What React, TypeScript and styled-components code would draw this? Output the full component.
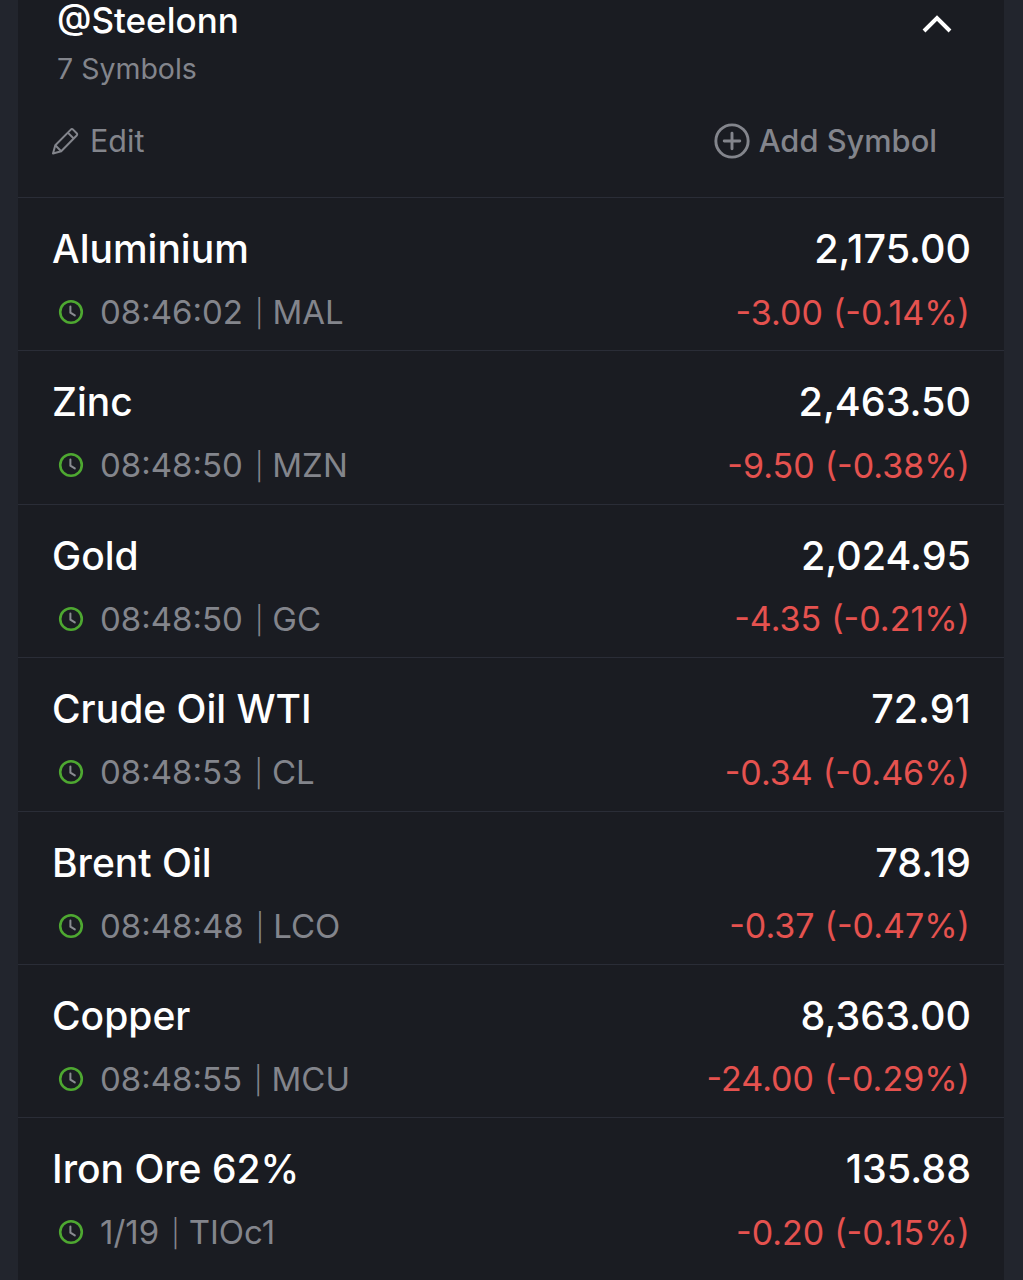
import { FC } from 'react'
import styled, { createGlobalStyle } from 'styled-components'

const GlobalStyle = createGlobalStyle`
  html, body {
    margin: 0;
    padding: 0;
    background: #22252d;
    overflow: hidden;
  }
`

const Page = styled.div`
  width: 1023px;
  height: 1280px;
  overflow: hidden;
  padding: 0 19px 0 18px;
  box-sizing: border-box;
  font-family: Inter, 'Liberation Sans', sans-serif;
`

const Panel = styled.section`
  background: #1a1c22;
  height: 100%;
`

const Header = styled.header`
  height: 198px;
  padding: 1px 52px 0 34px;
  box-sizing: border-box;
  border-bottom: 1px solid #2a2d37;
  display: flex;
  flex-direction: column;
`

const TitleRow = styled.div`
  display: flex;
  justify-content: space-between;
  align-items: flex-start;
  padding-left: 5px;
`

const Title = styled.h2`
  margin: 0;
  font-size: 35px;
  line-height: 38px;
  font-weight: 500;
  color: #fff;
`

const Collapse = styled.svg`
  width: 32px;
  height: 20px;
  margin: 13px -1px 0 0;
`

const Count = styled.div`
  margin-top: 13px;
  padding-left: 5px;
  font-size: 28.5px;
  line-height: 34px;
  color: #83858c;
`

const Actions = styled.div`
  margin-top: 35px;
  padding-right: 15px;
  display: flex;
  justify-content: space-between;
  align-items: center;
`

const Action = styled.div`
  display: flex;
  align-items: center;
  gap: 11px;
  margin-left: -1px;
  font-size: 30.5px;
  line-height: 40px;
  color: #83858c;
`

const AddAction = styled(Action)`
  gap: 9px;
  margin-left: 0;
  font-size: 30.8px;
  font-weight: 500;
`

const Row = styled.article`
  height: 153.4px;
  box-sizing: border-box;
  padding: 28px 33px 0 34px;
  border-bottom: 1px solid #2a2d37;

  &:last-child {
    border-bottom: 0;
  }
`

const Line = styled.div`
  display: flex;
  justify-content: space-between;
  align-items: center;
`

const SubLine = styled(Line)`
  margin-top: 20px;
  padding-right: 1px;
`

const Name = styled.div`
  font-size: 39px;
  line-height: 46px;
  font-weight: 500;
  color: #fff;
`

const Price = styled.div`
  font-size: 39.5px;
  line-height: 46px;
  font-weight: 500;
  color: #fff;
`

const Meta = styled.div`
  display: flex;
  align-items: center;
  gap: 16px;
  padding-left: 6px;
  font-size: 33px;
  line-height: 40px;
  color: #83858c;
`

const Clock = styled.svg`
  width: 26px;
  height: 26px;
  margin-bottom: 3px;
`

const Pipe = styled.span`
  font-size: 27px;
  font-weight: 300;
  margin: 0 9px 0 12px;
  position: relative;
  top: -1px;
`

const Change = styled.div`
  display: flex;
  gap: 10px;
  margin-bottom: 2px;
  font-size: 34px;
  line-height: 40px;
  color: #e5524f;
`

const ClockIcon: FC = () => (
  <Clock viewBox="0 0 26 26" fill="none">
    <circle cx="13" cy="13" r="10.8" stroke="#4ea831" strokeWidth="2.6" />
    <path d="M12.4 7.5V13.6L16.8 16.4" stroke="#8a8c92" strokeWidth="2" strokeLinecap="round" />
  </Clock>
)

const PencilIcon: FC = () => (
  <svg width="28" height="28" viewBox="0 0 28 28" fill="none" stroke="#83858c" strokeWidth="2" strokeLinejoin="round">
    <path d="M2 26.5l2.3-8.2L19.8 2.6a1.6 1.6 0 0 1 2.3 0l3.6 3.6a1.6 1.6 0 0 1 0 2.3L10.2 24.2 2 26.5z" />
    <path d="M16.8 5.6l5.9 5.9M4.3 18.3l5.9 5.9" />
  </svg>
)

const PlusCircleIcon: FC = () => (
  <svg width="36" height="36" viewBox="0 0 37 37" fill="none" stroke="#83858c">
    <circle cx="18.5" cy="18.5" r="16.6" strokeWidth="3" />
    <path d="M18.5 10.5v16M10.5 18.5h16" strokeWidth="3" strokeLinecap="round" />
  </svg>
)

const symbols = [
  { name: 'Aluminium', time: '08:46:02', code: 'MAL', price: '2,175.00', change: '-3.00', percent: '(-0.14%)' },
  { name: 'Zinc', time: '08:48:50', code: 'MZN', price: '2,463.50', change: '-9.50', percent: '(-0.38%)' },
  { name: 'Gold', time: '08:48:50', code: 'GC', price: '2,024.95', change: '-4.35', percent: '(-0.21%)' },
  { name: 'Crude Oil WTI', time: '08:48:53', code: 'CL', price: '72.91', change: '-0.34', percent: '(-0.46%)' },
  { name: 'Brent Oil', time: '08:48:48', code: 'LCO', price: '78.19', change: '-0.37', percent: '(-0.47%)' },
  { name: 'Copper', time: '08:48:55', code: 'MCU', price: '8,363.00', change: '-24.00', percent: '(-0.29%)' },
  { name: 'Iron Ore 62%', time: '1/19', code: 'TIOc1', price: '135.88', change: '-0.20', percent: '(-0.15%)' }
]

export default function App() {
  return (
    <Page>
      <GlobalStyle />
      <Panel>
        <Header>
          <TitleRow>
            <Title>@Steelonn</Title>
            <Collapse viewBox="0 0 32 20" fill="none">
              <path d="M3 17L16 4l13 13" stroke="#fff" strokeWidth="4" />
            </Collapse>
          </TitleRow>
          <Count>7 Symbols</Count>
          <Actions>
            <Action>
              <PencilIcon />
              <span>Edit</span>
            </Action>
            <AddAction>
              <PlusCircleIcon />
              <span>Add Symbol</span>
            </AddAction>
          </Actions>
        </Header>
        {symbols.map((s) => (
          <Row key={s.name}>
            <Line>
              <Name>{s.name}</Name>
              <Price>{s.price}</Price>
            </Line>
            <SubLine>
              <Meta>
                <ClockIcon />
                <span>
                  {s.time}
                  <Pipe>|</Pipe>
                  {s.code}
                </span>
              </Meta>
              <Change>
                <span>{s.change}</span>
                <span>{s.percent}</span>
              </Change>
            </SubLine>
          </Row>
        ))}
      </Panel>
    </Page>
  )
}
